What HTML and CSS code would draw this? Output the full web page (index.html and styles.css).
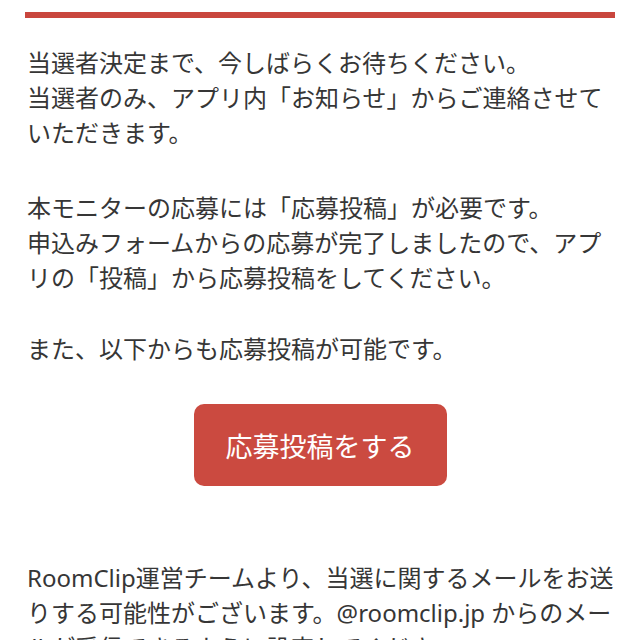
FILE: index.html
```html
<!DOCTYPE html>
<html lang="ja">
<head>
<meta charset="utf-8">
<link rel="stylesheet" href="styles.css">
</head>
<body>
<div class="page">
  <div class="bar"></div>
  <p class="para first">当選者決定まで、今しばらくお待ちください。<br>当選者のみ、アプリ内「お知らせ」からご連絡させていただきます。</p>
  <p class="para second">本モニターの応募には「応募投稿」が必要です。<br>申込みフォームからの応募が完了しましたので、アプリの「投稿」から応募投稿をしてください。</p>
  <p class="para third">また、以下からも応募投稿が可能です。</p>
  <div class="btn-row"><a class="btn">応募投稿をする</a></div>
  <p class="para note">RoomClip運営チームより、当選に関するメールをお送りする可能性がございます。@roomclip.jp からのメールが受信できるように設定してください。</p>
</div>
</body>
</html>
```
FILE: styles.css
```css
html, body {
  margin: 0;
  padding: 0;
  background: #ffffff;
}
.page {
  padding: 12px 20px 0 27px;
  font-family: "Noto Sans", "Noto Sans CJK JP", sans-serif;
  color: #363636;
  font-size: 24px;
  line-height: 35px;
}
.bar {
  height: 6px;
  background: #c9463d;
  margin: 0 5px 0 -2px;
}
.para {
  margin: 0;
}
.para.first {
  margin-top: 27px;
}
.para.second {
  margin-top: 40px;
}
.para.third {
  margin-top: 36px;
}
.btn-row {
  display: flex;
  justify-content: center;
  margin: 38px 5px 0 -2px;
}
.btn {
  display: flex;
  align-items: center;
  justify-content: center;
  width: 253px;
  height: 82px;
  background: #cb4a40;
  color: #ffffff;
  border-radius: 10px;
  font-family: "Noto Sans CJK JP", sans-serif;
  font-size: 27px;
  line-height: 1;
}
.para.note {
  margin-top: 74px;
}
```
